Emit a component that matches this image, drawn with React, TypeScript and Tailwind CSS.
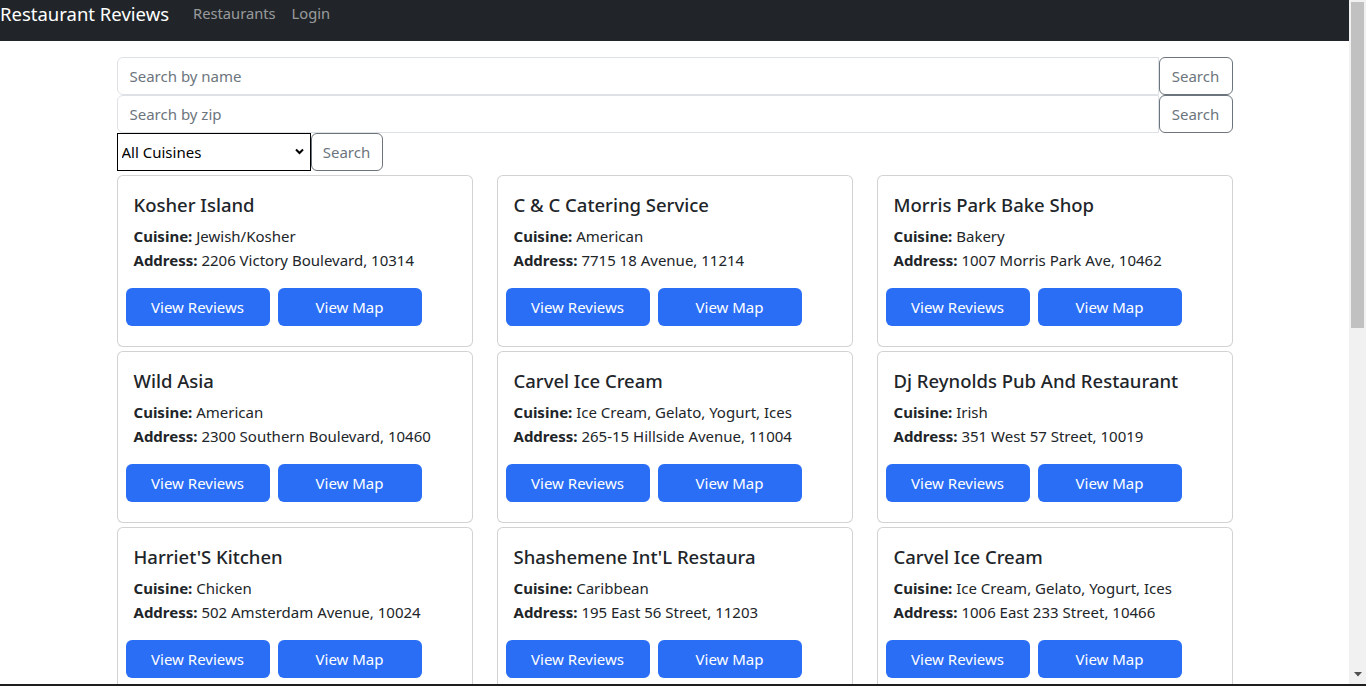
type R = { name: string; cuisine: string; address: string };

const restaurants: R[] = [
  { name: "Kosher Island", cuisine: "Jewish/Kosher", address: "2206 Victory Boulevard, 10314" },
  { name: "C & C Catering Service", cuisine: "American", address: "7715 18 Avenue, 11214" },
  { name: "Morris Park Bake Shop", cuisine: "Bakery", address: "1007 Morris Park Ave, 10462" },
  { name: "Wild Asia", cuisine: "American", address: "2300 Southern Boulevard, 10460" },
  { name: "Carvel Ice Cream", cuisine: "Ice Cream, Gelato, Yogurt, Ices", address: "265-15 Hillside Avenue, 11004" },
  { name: "Dj Reynolds Pub And Restaurant", cuisine: "Irish", address: "351 West 57 Street, 10019" },
  { name: "Harriet'S Kitchen", cuisine: "Chicken", address: "502 Amsterdam Avenue, 10024" },
  { name: "Shashemene Int'L Restaura", cuisine: "Caribbean", address: "195 East 56 Street, 11203" },
  { name: "Carvel Ice Cream", cuisine: "Ice Cream, Gelato, Yogurt, Ices", address: "1006 East 233 Street, 10466" },
];

function SearchRow({ placeholder }: { placeholder: string }) {
  return (
    <div className="flex h-[38px]">
      <input
        className="flex-1 min-w-0 h-[38px] rounded-l-[6px] border border-[#dee2e6] px-3 text-[15px] text-[#212529] placeholder:text-[#6c757d] outline-none"
        placeholder={placeholder}
      />
      <button className="w-[74px] h-[38px] shrink-0 rounded-[6px] border border-[#6c757d] text-[15px] text-[#6c757d] bg-white">
        Search
      </button>
    </div>
  );
}

function Card({ r }: { r: R }) {
  return (
    <div className="h-[172px] rounded-[6px] border border-[rgba(0,0,0,0.175)] bg-white overflow-hidden">
      <div className="px-4 pt-[17px]">
        <h5 className="text-[18.5px] leading-[24px] font-medium text-[#212529] whitespace-nowrap">{r.name}</h5>
        <div className="mt-[7px] text-[15px] leading-[24px] text-[#212529]">
          <div className="whitespace-nowrap">
            <span className="font-bold">Cuisine:</span> {r.cuisine}
          </div>
          <div className="whitespace-nowrap">
            <span className="font-bold">Address:</span> {r.address}
          </div>
        </div>
      </div>
      <div className="mt-4 pl-2 flex gap-2">
        <button className="w-[144px] h-[38px] rounded-[6px] bg-[#2a6ef6] text-white text-[15px]">View Reviews</button>
        <button className="w-[144px] h-[38px] rounded-[6px] bg-[#2a6ef6] text-white text-[15px]">View Map</button>
      </div>
    </div>
  );
}

export default function App() {
  return (
    <div
      className="w-[1366px] h-[686px] overflow-hidden flex flex-col bg-white text-[#212529]"
      style={{ fontFamily: '"Noto Sans", sans-serif' }}
    >
      <div className="flex-1 min-h-0 flex">
        <div className="w-[1349px] flex flex-col overflow-hidden">
          <nav className="h-[41px] shrink-0 bg-[#212529] flex items-start">
            <span className="text-[18.5px] leading-[28px] text-white mr-4">Restaurant Reviews</span>
            <a className="px-2 text-[14.7px] leading-[26px] text-[rgba(255,255,255,0.55)]">Restaurants</a>
            <a className="px-2 text-[14.7px] leading-[26px] text-[rgba(255,255,255,0.55)]">Login</a>
          </nav>
          <div className="w-[1116px] mx-auto pt-4">
            <SearchRow placeholder="Search by name" />
            <SearchRow placeholder="Search by zip" />
            <div className="flex h-[38px]">
              <div className="relative w-[194px] h-[38px]">
                <select className="w-full h-full appearance-none border border-black bg-white pl-[4px] text-[15px] text-black outline-none">
                  <option>All Cuisines</option>
                </select>
                <svg
                  className="absolute right-[7px] top-[15px] pointer-events-none"
                  width="9"
                  height="7"
                  viewBox="0 0 9 7"
                >
                  <path d="M1 1.5 L4.5 5 L8 1.5" fill="none" stroke="#000" strokeWidth="2" />
                </svg>
              </div>
              <button className="w-[72px] h-[38px] rounded-[6px] border border-[#6c757d] text-[15px] text-[#6c757d] bg-white">
                Search
              </button>
            </div>
            <div className="mt-1 grid grid-cols-3 gap-x-6 gap-y-1">
              {restaurants.map((r, i) => (
                <Card key={i} r={r} />
              ))}
            </div>
          </div>
        </div>
        <div className="w-[17px] shrink-0 bg-[#f1f1f1] flex flex-col items-center justify-between">
          <div className="mt-[2px] w-[13px] h-[326px] bg-[#c1c1c1]" />
          <svg className="mb-[7px]" width="8" height="5" viewBox="0 0 8 5">
            <path d="M0 0 L8 0 L4 4.5 Z" fill="#505050" />
          </svg>
        </div>
      </div>
      <div className="h-[2px] shrink-0 bg-[#1e1e1e]" />
    </div>
  );
}
